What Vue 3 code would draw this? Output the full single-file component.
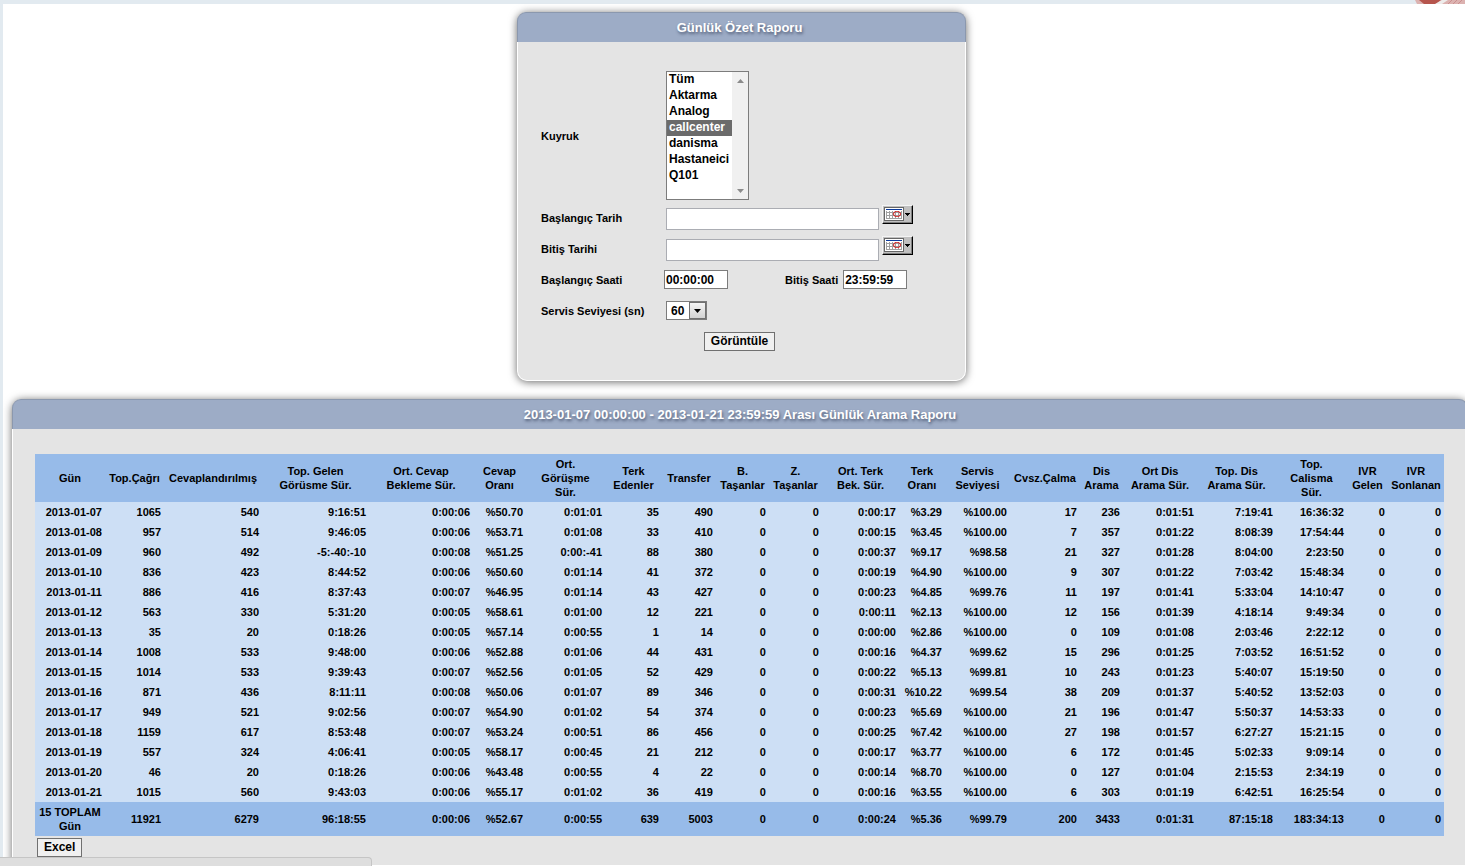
<script setup>
import { ref } from 'vue'

const queues = ['Tüm', 'Aktarma', 'Analog', 'callcenter', 'danisma', 'Hastaneici', 'Q101']
const queue = ref(['callcenter'])
const startDate = ref('')
const endDate = ref('')
const startTime = ref('00:00:00')
const endTime = ref('23:59:59')
const level = ref('60')

const columns = [
  [['Gün'], 70],
  [['Top.Çağrı'], 59],
  [['Cevaplandırılmış'], 98],
  [['Top. Gelen', 'Görüsme Sür.'], 107],
  [['Ort. Cevap', 'Bekleme Sür.'], 104],
  [['Cevap', 'Oranı'], 53],
  [['Ort.', 'Görüşme', 'Sür.'], 79],
  [['Terk', 'Edenler'], 57],
  [['Transfer'], 54],
  [['B.', 'Taşanlar'], 53],
  [['Z.', 'Taşanlar'], 53],
  [['Ort. Terk', 'Bek. Sür.'], 77],
  [['Terk', 'Oranı'], 46],
  [['Servis', 'Seviyesi'], 65],
  [['Cvsz.Çalma'], 70],
  [['Dis', 'Arama'], 43],
  [['Ort Dis', 'Arama Sür.'], 74],
  [['Top. Dis', 'Arama Sür.'], 79],
  [['Top.', 'Calisma', 'Sür.'], 71],
  [['IVR', 'Gelen'], 41],
  [['IVR', 'Sonlanan'], 56],
].map(([lines, width]) => ({ lines, width }))

const totalWidth = columns.reduce((sum, c) => sum + c.width, 0)

const rows = `2013-01-07 1065 540 9:16:51 0:00:06 %50.70 0:01:01 35 490 0 0 0:00:17 %3.29 %100.00 17 236 0:01:51 7:19:41 16:36:32 0 0
2013-01-08 957 514 9:46:05 0:00:06 %53.71 0:01:08 33 410 0 0 0:00:15 %3.45 %100.00 7 357 0:01:22 8:08:39 17:54:44 0 0
2013-01-09 960 492 -5:-40:-10 0:00:08 %51.25 0:00:-41 88 380 0 0 0:00:37 %9.17 %98.58 21 327 0:01:28 8:04:00 2:23:50 0 0
2013-01-10 836 423 8:44:52 0:00:06 %50.60 0:01:14 41 372 0 0 0:00:19 %4.90 %100.00 9 307 0:01:22 7:03:42 15:48:34 0 0
2013-01-11 886 416 8:37:43 0:00:07 %46.95 0:01:14 43 427 0 0 0:00:23 %4.85 %99.76 11 197 0:01:41 5:33:04 14:10:47 0 0
2013-01-12 563 330 5:31:20 0:00:05 %58.61 0:01:00 12 221 0 0 0:00:11 %2.13 %100.00 12 156 0:01:39 4:18:14 9:49:34 0 0
2013-01-13 35 20 0:18:26 0:00:05 %57.14 0:00:55 1 14 0 0 0:00:00 %2.86 %100.00 0 109 0:01:08 2:03:46 2:22:12 0 0
2013-01-14 1008 533 9:48:00 0:00:06 %52.88 0:01:06 44 431 0 0 0:00:16 %4.37 %99.62 15 296 0:01:25 7:03:52 16:51:52 0 0
2013-01-15 1014 533 9:39:43 0:00:07 %52.56 0:01:05 52 429 0 0 0:00:22 %5.13 %99.81 10 243 0:01:23 5:40:07 15:19:50 0 0
2013-01-16 871 436 8:11:11 0:00:08 %50.06 0:01:07 89 346 0 0 0:00:31 %10.22 %99.54 38 209 0:01:37 5:40:52 13:52:03 0 0
2013-01-17 949 521 9:02:56 0:00:07 %54.90 0:01:02 54 374 0 0 0:00:23 %5.69 %100.00 21 196 0:01:47 5:50:37 14:53:33 0 0
2013-01-18 1159 617 8:53:48 0:00:07 %53.24 0:00:51 86 456 0 0 0:00:25 %7.42 %100.00 27 198 0:01:57 6:27:27 15:21:15 0 0
2013-01-19 557 324 4:06:41 0:00:05 %58.17 0:00:45 21 212 0 0 0:00:17 %3.77 %100.00 6 172 0:01:45 5:02:33 9:09:14 0 0
2013-01-20 46 20 0:18:26 0:00:06 %43.48 0:00:55 4 22 0 0 0:00:14 %8.70 %100.00 0 127 0:01:04 2:15:53 2:34:19 0 0
2013-01-21 1015 560 9:43:03 0:00:06 %55.17 0:01:02 36 419 0 0 0:00:16 %3.55 %100.00 6 303 0:01:19 6:42:51 16:25:54 0 0`
  .split('\n')
  .map((line) => line.split(' '))

const totals = '11921 6279 96:18:55 0:00:06 %52.67 0:00:55 639 5003 0 0 0:00:24 %5.36 %99.79 200 3433 0:01:31 87:15:18 183:34:13 0 0'.split(' ')
</script>

<template>
  <div class="page">
    <header class="banner">
      <svg class="banner-art" width="50" height="4" viewBox="0 0 50 4" aria-hidden="true">
        <path d="M0 0H50V4H2z" fill="#dcb2b0" />
        <path d="M4 0H26L21 4H9z" fill="#b6554d" />
        <path d="M27 0H33L27 4H20z" fill="#eeeceb" />
        <path d="M33 4l4-4M38 4l4-4M43 4l4-4" stroke="#c98f8f" />
      </svg>
    </header>

    <main class="content">
      <section class="panel filter">
        <h1 class="title">Günlük Özet Raporu</h1>
        <form class="form" @submit.prevent>
          <label class="queue-label" for="queue">Kuyruk</label>
          <div class="listbox">
            <select id="queue" v-model="queue" multiple size="7">
              <option v-for="q in queues" :key="q" :value="q">{{ q }}</option>
            </select>
            <div class="track" aria-hidden="true">
              <svg width="7" height="4" viewBox="0 0 7 4"><path d="M0 4L3.500 0L7 4z" fill="#8b8b8b" /></svg>
              <svg width="7" height="4" viewBox="0 0 7 4"><path d="M0 0L3.500 4L7 0z" fill="#8b8b8b" /></svg>
            </div>
          </div>

          <label for="start-date">Başlangıç Tarih</label>
          <div class="field">
            <input id="start-date" v-model="startDate" class="date" type="text" />
            <button class="calendar" type="button" aria-label="Başlangıç Tarih">
              <svg width="29" height="17" viewBox="0 0 29 17" shape-rendering="crispEdges" aria-hidden="true">
                <path d="M1 1H21V15H1z" fill="#666" />
                <path d="M2 2H20V14H2z" fill="#fff" />
                <path d="M3 6.500H19M3 9.500H19M3 12.500H19M3.500 5V13M6.500 5V13M9.500 5V13M12.500 5V13M15.500 5V13M18.500 5V13" stroke="#a0a0a0" fill="none" />
                <path d="M3 3.500H19" stroke="#0a3a9c" />
                <rect x="10.500" y="5.500" width="7" height="5" rx="3" fill="none" stroke="#d00f0f" shape-rendering="auto" />
                <path d="M22 7H27V8H26V9H25V10H24V9H23V8H22z" fill="#000" />
              </svg>
            </button>
          </div>

          <label for="end-date">Bitiş Tarihi</label>
          <div class="field">
            <input id="end-date" v-model="endDate" class="date" type="text" />
            <button class="calendar" type="button" aria-label="Bitiş Tarihi">
              <svg width="29" height="17" viewBox="0 0 29 17" shape-rendering="crispEdges" aria-hidden="true">
                <path d="M1 1H21V15H1z" fill="#666" />
                <path d="M2 2H20V14H2z" fill="#fff" />
                <path d="M3 6.500H19M3 9.500H19M3 12.500H19M3.500 5V13M6.500 5V13M9.500 5V13M12.500 5V13M15.500 5V13M18.500 5V13" stroke="#a0a0a0" fill="none" />
                <path d="M3 3.500H19" stroke="#0a3a9c" />
                <rect x="10.500" y="5.500" width="7" height="5" rx="3" fill="none" stroke="#d00f0f" shape-rendering="auto" />
                <path d="M22 7H27V8H26V9H25V10H24V9H23V8H22z" fill="#000" />
              </svg>
            </button>
          </div>

          <label for="start-time">Başlangıç Saati</label>
          <div class="field times">
            <input id="start-time" v-model="startTime" class="time" type="text" />
            <label class="end-label" for="end-time">Bitiş Saati</label>
            <input id="end-time" v-model="endTime" class="time" type="text" />
          </div>

          <label for="level">Servis Seviyesi (sn)</label>
          <div class="field">
            <div class="combo">
              <select id="level" v-model="level">
                <option>60</option>
              </select>
              <span class="drop" aria-hidden="true">
                <svg width="7" height="4" viewBox="0 0 7 4"><path d="M0 0H7L3.500 4z" fill="#000" /></svg>
              </span>
            </div>
          </div>

          <button class="plain show" type="submit">Görüntüle</button>
        </form>
      </section>

      <section class="panel report">
        <h2 class="title">2013-01-07 00:00:00 - 2013-01-21 23:59:59 Arası Günlük Arama Raporu</h2>
        <div class="report-body">
          <table>
            <colgroup>
              <col v-for="(c, i) in columns" :key="i" :style="{ width: (c.width / totalWidth) * 100 + '%' }" />
            </colgroup>
            <thead>
              <tr>
                <th v-for="(c, i) in columns" :key="i" scope="col">
                  <template v-for="(line, j) in c.lines" :key="j"><br v-if="j" />{{ line }}</template>
                </th>
              </tr>
            </thead>
            <tbody>
              <tr v-for="row in rows" :key="row[0]">
                <td v-for="(cell, i) in row" :key="i">{{ cell }}</td>
              </tr>
            </tbody>
            <tfoot>
              <tr>
                <th scope="row">15 TOPLAM<br />Gün</th>
                <td v-for="(cell, i) in totals" :key="i">{{ cell }}</td>
              </tr>
            </tfoot>
          </table>
          <button class="plain excel" type="button">Excel</button>
        </div>
      </section>
    </main>
    <div class="status" aria-hidden="true"></div>
  </div>
</template>

<style>
body {
  background: #fff;
}
</style>

<style scoped>
* {
  box-sizing: border-box;
}
.page {
  height: 100vh;
  overflow: hidden;
  display: flex;
  flex-direction: column;
  border-left: 3px solid #e2eaf0;
  font: bold 11px/14px "Liberation Sans", Arial, sans-serif;
  color: #000;
}
input,
select,
option,
button {
  font: bold 12px/16px "Liberation Sans", Arial, sans-serif;
  color: #000;
  margin: 0;
  border-radius: 0;
}
.banner {
  display: flex;
  justify-content: flex-end;
  flex: none;
  height: 4px;
  background: #e2eaf0;
}
.banner-art {
  display: block;
}
.content {
  flex: 1;
  display: flex;
  flex-direction: column;
  gap: 18px;
  margin-right: -12px;
  padding: 8px 9px 0;
}
.panel {
  background: #e4e4e4;
  border: 1px solid #fff;
  border-top: 0;
  box-shadow: 0 1px 9px rgba(0, 0, 0, 0.6);
}
.title {
  margin: 0 -1px;
  height: 30px;
  border: 1px solid #8b98ae;
  border-bottom: 0;
  border-radius: 9px 9px 0 0;
  background: #9dacc6;
  color: #fff;
  font-size: 13px;
  line-height: 29px;
  text-align: center;
  text-shadow: 1px 2px 3px rgba(50, 60, 85, 0.7);
}
.filter {
  align-self: center;
  width: 449px;
  margin-left: 3px;
  border-radius: 10px;
}
.filter .title {
  padding-right: 4px;
}
.form {
  display: grid;
  grid-template-columns: 125px 1fr;
  grid-template-rows: 129px;
  grid-auto-rows: 23px;
  gap: 8px 0;
  padding: 29px 23px 25px;
  line-height: 20px;
}
.queue-label {
  align-self: center;
}
.listbox {
  display: flex;
  width: 83px;
  border: 1px solid #7c7c7c;
  background: #fff;
}
.listbox select {
  flex: 1;
  min-width: 0;
  height: 127px;
  padding: 0;
  border: 0;
  outline: 0;
  overflow: hidden;
  background: #fff;
}
.listbox option {
  height: 16px;
  min-height: 16px;
  padding: 0 2px;
  line-height: 16px;
}
.listbox option:checked {
  background: linear-gradient(#6b6b6b, #6b6b6b);
  -webkit-text-fill-color: #fff;
}
.track {
  display: flex;
  flex-direction: column;
  align-items: center;
  justify-content: space-between;
  width: 16px;
  padding: 7px 0 6px;
  background: #f0f0f0;
}
.field {
  display: flex;
  align-items: flex-start;
}
.date {
  width: 213px;
  height: 22px;
  border: 1px solid #abadb3;
  background: #fff;
}
.calendar {
  display: flex;
  width: 31px;
  height: 19px;
  margin: -3px 0 0 3px;
  padding: 0;
  border: 1px solid;
  border-color: #f4f4f4 #000 #000 #f4f4f4;
  background: #c0c0c0;
  box-shadow: inset -1px -1px #808080;
}
.times {
  margin-left: -2px;
}
.time {
  width: 64px;
  height: 19px;
  padding: 0 1px;
  border: 1px solid #7c7c7c;
  background: #fff;
}
.end-label {
  margin: 0 5px 0 57px;
}
.combo {
  display: flex;
  position: relative;
}
.combo select {
  appearance: none;
  width: 41px;
  height: 19px;
  padding: 0 0 0 4px;
  border: 1px solid #7c7c7c;
  background: #fff;
}
.drop {
  position: absolute;
  inset: 1px 1px 1px auto;
  width: 17px;
  display: flex;
  align-items: center;
  justify-content: center;
  border: 1px solid #707070;
  background: linear-gradient(#f4f4f4, #d2d2d2);
  pointer-events: none;
}
.plain {
  height: 19px;
  padding: 0 6px;
  border: 1px solid #707070;
  background: #f0f0f0;
  line-height: 17px;
}
.show {
  grid-column: 1 / -1;
  justify-self: center;
  margin-right: 4px;
}
.report {
  flex: 1;
  border-radius: 10px 10px 0 0;
}
.report-body {
  padding: 25px 23px 0 22px;
}
table {
  width: 100%;
  table-layout: fixed;
  border-collapse: collapse;
  background: #cddff5;
}
th,
td {
  padding: 3px;
  text-align: right;
  white-space: nowrap;
}
th {
  padding: 3px 0;
  text-align: center;
}
thead,
tfoot {
  background: #97bbe9;
}
.excel {
  display: block;
  margin: 2px 0 0 2px;
}
.status {
  position: fixed;
  left: 0;
  bottom: 0;
  width: 372px;
  height: 9px;
  border: 1px solid #c5c5c5;
  border-width: 1px 1px 0 0;
  border-radius: 0 4px 0 0;
  background: #dedede;
}
</style>
